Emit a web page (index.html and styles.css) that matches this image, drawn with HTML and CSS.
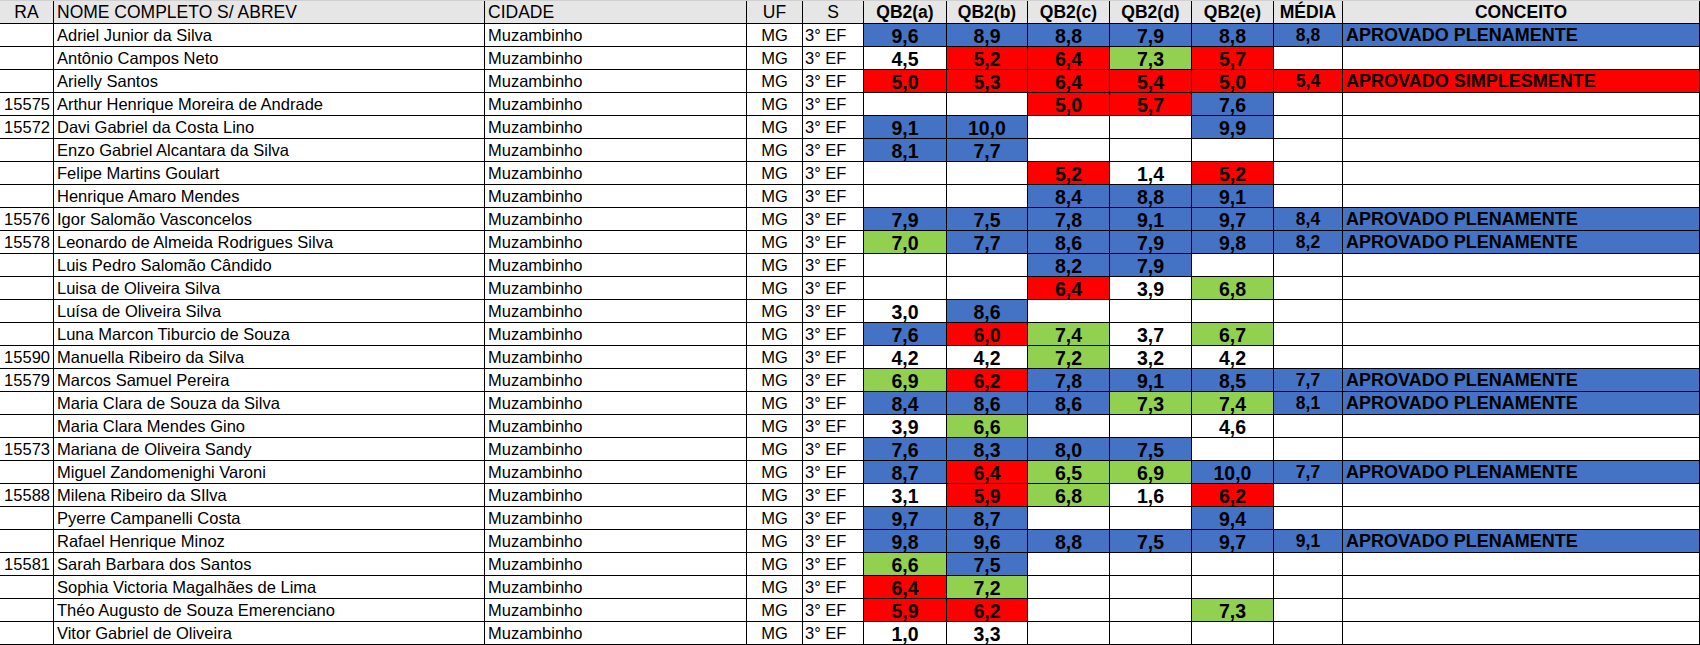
FILE: index.html
```html
<!DOCTYPE html>
<html lang="pt-BR">
<head>
<meta charset="utf-8">
<title>Notas QB2</title>
<link rel="stylesheet" href="styles.css">
</head>
<body>
<div class="sheet" id="sheet">
  <div class="row head">
    <div class="c ra-h">RA</div>
    <div class="c left">NOME COMPLETO S/ ABREV</div>
    <div class="c left">CIDADE</div>
    <div class="c ctr">UF</div>
    <div class="c ctr">S</div>
    <div class="c ctr bold">QB2(a)</div>
    <div class="c ctr bold">QB2(b)</div>
    <div class="c ctr bold">QB2(c)</div>
    <div class="c ctr bold">QB2(d)</div>
    <div class="c ctr bold">QB2(e)</div>
    <div class="c ctr bold">MÉDIA</div>
    <div class="c ctr bold">CONCEITO</div>
  </div>
</div>
<script src="app.js"></script>
</body>
</html>
```
FILE: styles.css
```css
* { box-sizing: border-box; }
html, body { margin: 0; padding: 0; background: #ffffff; }
body {
  font-family: "Liberation Sans", Arial, sans-serif;
  color: #000;
  width: 1700px;
  height: 645px;
  overflow: hidden;
}
.sheet { display: flex; flex-direction: column; }
.row {
  display: grid;
  grid-template-columns: 54px 431px 262px 56px 61px 83px 81px 82px 82px 82px 69px 357px;
  height: 23px;
}
.row.head {
  height: 24px;
  background: #e6e6e6;
  border-top: 1px solid #d0d0d0;
}
.c {
  border-right: 1px solid #000;
  border-bottom: 1px solid #000;
  white-space: nowrap;
  overflow: hidden;
  font-size: 16.5px;
  line-height: 20px;
  padding: 1px 3px 1px 3px;
  display: flex;
  align-items: flex-end;
}
.head .c { font-size: 17.5px; padding-bottom: 1px; }
.ra-h { justify-content: center; }
.left { justify-content: flex-start; }
.ctr { justify-content: center; }
.bold { font-weight: bold; }
.ra { justify-content: flex-end; padding-right: 3px; }
.nm { padding-left: 3px; }
.city { padding-left: 3px; }
.uf { justify-content: center; }
.s { padding-left: 2px; }
.q { justify-content: center; font-weight: bold; font-size: 19.5px; padding-bottom: 0; }
.m { justify-content: center; font-weight: bold; font-size: 17.5px; }
.k { font-weight: bold; font-size: 18px; padding-left: 3px; }
.B { background: #4472c4; }
.R { background: #ff0000; }
.G { background: #92d050; }
```
FILE: app.js
```js
const rows = [
  ["", "Adriel Junior da Silva", ["9,6B","8,9B","8,8B","7,9B","8,8B"], "8,8B", "APROVADO PLENAMENTE", "B"],
  ["", "Antônio Campos Neto", ["4,5","5,2R","6,4R","7,3G","5,7R"], "", "", ""],
  ["", "Arielly Santos", ["5,0R","5,3R","6,4R","5,4R","5,0R"], "5,4R", "APROVADO SIMPLESMENTE", "R"],
  ["15575", "Arthur Henrique Moreira de Andrade", ["","","5,0R","5,7R","7,6B"], "", "", ""],
  ["15572", "Davi Gabriel da Costa Lino", ["9,1B","10,0B","","","9,9B"], "", "", ""],
  ["", "Enzo Gabriel Alcantara da Silva", ["8,1B","7,7B","","",""], "", "", ""],
  ["", "Felipe Martins Goulart", ["","","5,2R","1,4","5,2R"], "", "", ""],
  ["", "Henrique Amaro Mendes", ["","","8,4B","8,8B","9,1B"], "", "", ""],
  ["15576", "Igor Salomão Vasconcelos", ["7,9B","7,5B","7,8B","9,1B","9,7B"], "8,4B", "APROVADO PLENAMENTE", "B"],
  ["15578", "Leonardo de Almeida Rodrigues Silva", ["7,0G","7,7B","8,6B","7,9B","9,8B"], "8,2B", "APROVADO PLENAMENTE", "B"],
  ["", "Luis Pedro Salomão Cândido", ["","","8,2B","7,9B",""], "", "", ""],
  ["", "Luisa de Oliveira Silva", ["","","6,4R","3,9","6,8G"], "", "", ""],
  ["", "Luísa de Oliveira Silva", ["3,0","8,6B","","",""], "", "", ""],
  ["", "Luna Marcon Tiburcio de Souza", ["7,6B","6,0R","7,4G","3,7","6,7G"], "", "", ""],
  ["15590", "Manuella Ribeiro da Silva", ["4,2","4,2","7,2G","3,2","4,2"], "", "", ""],
  ["15579", "Marcos Samuel Pereira", ["6,9G","6,2R","7,8B","9,1B","8,5B"], "7,7B", "APROVADO PLENAMENTE", "B"],
  ["", "Maria Clara de Souza da Silva", ["8,4B","8,6B","8,6B","7,3G","7,4G"], "8,1B", "APROVADO PLENAMENTE", "B"],
  ["", "Maria Clara Mendes Gino", ["3,9","6,6G","","","4,6"], "", "", ""],
  ["15573", "Mariana de Oliveira Sandy", ["7,6B","8,3B","8,0B","7,5B",""], "", "", ""],
  ["", "Miguel Zandomenighi Varoni", ["8,7B","6,4R","6,5G","6,9G","10,0B"], "7,7B", "APROVADO PLENAMENTE", "B"],
  ["15588", "Milena Ribeiro da SIlva", ["3,1","5,9R","6,8G","1,6","6,2R"], "", "", ""],
  ["", "Pyerre Campanelli Costa", ["9,7B","8,7B","","","9,4B"], "", "", ""],
  ["", "Rafael Henrique Minoz", ["9,8B","9,6B","8,8B","7,5B","9,7B"], "9,1B", "APROVADO PLENAMENTE", "B"],
  ["15581", "Sarah Barbara dos Santos", ["6,6G","7,5B","","",""], "", "", ""],
  ["", "Sophia Victoria Magalhães de Lima", ["6,4R","7,2G","","",""], "", "", ""],
  ["", "Théo Augusto de Souza Emerenciano", ["5,9R","6,2R","","","7,3G"], "", "", ""],
  ["", "Vitor Gabriel de Oliveira", ["1,0","3,3","","",""], "", "", ""]
];

function cell(cls, text) {
  const d = document.createElement("div");
  d.className = "c " + cls;
  d.textContent = text;
  return d;
}
function split(v) {
  const m = v.match(/^(.*?)([BRG]?)$/);
  return [m[1], m[2]];
}
const sheet = document.getElementById("sheet");
rows.forEach(r => {
  const row = document.createElement("div");
  row.className = "row";
  row.appendChild(cell("ra", r[0]));
  row.appendChild(cell("nm", r[1]));
  row.appendChild(cell("city", "Muzambinho"));
  row.appendChild(cell("uf", "MG"));
  row.appendChild(cell("s", "3° EF"));
  r[2].forEach(v => {
    const [t, c] = split(v);
    row.appendChild(cell("q " + c, t));
  });
  const [mt, mc] = split(r[3]);
  row.appendChild(cell("m " + mc, mt));
  row.appendChild(cell("k " + r[5], r[4]));
  sheet.appendChild(row);
});
```
